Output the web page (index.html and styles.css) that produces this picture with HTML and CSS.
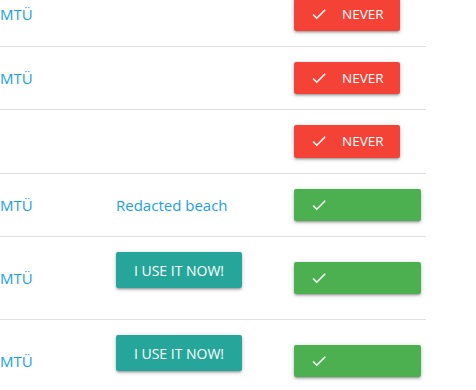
FILE: index.html
```html
<!DOCTYPE html>
<html lang="en">
<head>
    <meta charset="UTF-8">
    <meta name="viewport" content="width=device-width, initial-scale=1.0">
    <title>Beaches</title>
    <link rel="stylesheet" href="styles.css">
</head>
<body>
    <div class="table">
        <div class="row">
            <div class="cell"><a class="link">MTÜ</a></div>
            <div class="cell"></div>
            <div class="cell">
                <button class="btn never">
                    <svg class="check" viewBox="0 0 24 24"><path d="M9 16.17L4.83 12l-1.42 1.41L9 19 21 7l-1.41-1.41z"/></svg>
                    Never
                </button>
            </div>
        </div>
        <div class="row">
            <div class="cell"><a class="link">MTÜ</a></div>
            <div class="cell"></div>
            <div class="cell">
                <button class="btn never">
                    <svg class="check" viewBox="0 0 24 24"><path d="M9 16.17L4.83 12l-1.42 1.41L9 19 21 7l-1.41-1.41z"/></svg>
                    Never
                </button>
            </div>
        </div>
        <div class="row">
            <div class="cell"></div>
            <div class="cell"></div>
            <div class="cell">
                <button class="btn never">
                    <svg class="check" viewBox="0 0 24 24"><path d="M9 16.17L4.83 12l-1.42 1.41L9 19 21 7l-1.41-1.41z"/></svg>
                    Never
                </button>
            </div>
        </div>
        <div class="row">
            <div class="cell"><a class="link">MTÜ</a></div>
            <div class="cell"><a class="link">Redacted beach</a></div>
            <div class="cell">
                <button class="btn ok">
                    <svg class="check" viewBox="0 0 24 24"><path d="M9 16.17L4.83 12l-1.42 1.41L9 19 21 7l-1.41-1.41z"/></svg>
                </button>
            </div>
        </div>
        <div class="row">
            <div class="cell"><a class="link">MTÜ</a></div>
            <div class="cell"><button class="btn use">I use it now!</button></div>
            <div class="cell">
                <button class="btn ok">
                    <svg class="check" viewBox="0 0 24 24"><path d="M9 16.17L4.83 12l-1.42 1.41L9 19 21 7l-1.41-1.41z"/></svg>
                </button>
            </div>
        </div>
        <div class="row">
            <div class="cell"><a class="link">MTÜ</a></div>
            <div class="cell"><button class="btn use">I use it now!</button></div>
            <div class="cell">
                <button class="btn ok">
                    <svg class="check" viewBox="0 0 24 24"><path d="M9 16.17L4.83 12l-1.42 1.41L9 19 21 7l-1.41-1.41z"/></svg>
                </button>
            </div>
        </div>
    </div>
</body>
</html>
```

FILE: styles.css
```css
* {
    box-sizing: border-box;
    margin: 0;
    padding: 0;
}

body {
    background: #fff;
    font-family: 'Open Sans', sans-serif;
    overflow: hidden;
}

.table {
    width: 426px;
    margin-top: -17px;
}

.row {
    display: grid;
    grid-template-columns: 116px 178px 132px;
    align-items: center;
    padding: 15px 0;
    border-bottom: 1px solid #e0e0e0;
}

.cell {
    display: flex;
    align-items: center;
}

.link {
    color: #1a9fe3;
    font-size: 15px;
    cursor: pointer;
}

.btn {
    display: inline-flex;
    align-items: center;
    border: none;
    border-radius: 2px;
    color: #fff;
    font-family: 'Open Sans', sans-serif;
    font-size: 13.5px;
    text-transform: uppercase;
    cursor: pointer;
    box-shadow: 0 2px 2px 0 rgba(0, 0, 0, 0.14), 0 3px 1px -2px rgba(0, 0, 0, 0.12), 0 1px 5px 0 rgba(0, 0, 0, 0.2);
}

.check {
    width: 18px;
    height: 18px;
    fill: #fff;
    flex-shrink: 0;
}

.never {
    background: #f44336;
    height: 32.5px;
    width: 106px;
    padding: 0 16px;
    gap: 14px;
}

.ok {
    background: #4caf50;
    height: 32.5px;
    width: 127px;
    padding: 0 16px;
}

.use {
    background: #26a69a;
    height: 36px;
    width: 126px;
    justify-content: center;
    margin-bottom: 16px;
    font-size: 14px;
}
```
